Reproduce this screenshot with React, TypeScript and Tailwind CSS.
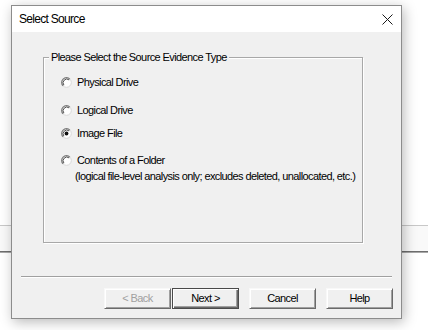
import React from 'react';

type RadioProps = { checked?: boolean };

function Radio({ checked = false }: RadioProps) {
  return (
    <svg width="11" height="11" viewBox="0 0 11 11" className="shrink-0">
      <circle cx="5.5" cy="5.5" r="4.8" fill="#ffffff" stroke="#d8d8d8" strokeWidth="1" />
      <path d="M2.1 8.9 A4.8 4.8 0 0 1 8.9 2.1" fill="none" stroke="#7a7a7a" strokeWidth="1.2" />
      <path d="M2.9 8.1 A3.7 3.7 0 0 1 8.1 2.9" fill="none" stroke="#3c3c3c" strokeWidth="0.9" />
      {checked && <circle cx="5.5" cy="5.5" r="1.9" fill="#111111" />}
    </svg>
  );
}

type OptionProps = { label: string; checked?: boolean; className?: string };

function Option({ label, checked, className = '' }: OptionProps) {
  return (
    <div className={`flex items-center ml-[17px] h-[13px] ${className}`}>
      <Radio checked={checked} />
      <span className="ml-[5px] whitespace-nowrap">{label}</span>
    </div>
  );
}

type ButtonProps = { label: string; disabled?: boolean; isDefault?: boolean; className?: string };

function WinButton({ label, disabled = false, isDefault = false, className = '' }: ButtonProps) {
  const frame = isDefault
    ? 'border border-[#4a4a4a] shadow-[inset_1px_1px_0_#ffffff,inset_-1px_-1px_0_#696969,inset_-2px_-2px_0_#a0a0a0]'
    : 'border border-t-[#f8f8f8] border-l-[#f8f8f8] border-r-[#6a6a6a] border-b-[#6a6a6a] shadow-[inset_1px_1px_0_#ffffff,inset_-1px_-1px_0_#a0a0a0]';
  return (
    <button
      disabled={disabled}
      className={`w-[67px] h-[21px] flex items-center justify-center bg-[#f0f0f0] ${frame} ${
        disabled ? 'text-[#a0a0a0]' : 'text-black'
      } ${className}`}
    >
      {label}
    </button>
  );
}

export default function App() {
  return (
    <div
      className="relative w-[440px] h-[330px] bg-white overflow-hidden text-[11px] leading-[13px] tracking-[-0.6px] text-black"
      style={{ fontFamily: '"Liberation Sans", Arial, sans-serif' }}
    >
      {/* window behind the dialog */}
      <div className="pt-[225px] w-[428px]">
        <div className="h-[1px] bg-[#c8c8c8]" />
        <div className="h-[25px] bg-[#f9f9f9]" />
        <div className="h-[1px] bg-[#6e6e6e]" />
        <div className="h-[1px] bg-[#a8a8a8]" />
      </div>

      {/* dialog */}
      <div className="absolute left-[11px] top-[5px] w-[391px] h-[314px] border border-[#8c8c8c] bg-[#f0f0f0] shadow-[2px_3px_12px_rgba(0,0,0,0.28)] flex flex-col">
        <div className="h-[26px] bg-white flex items-center justify-between pl-[7px] pr-[8px] shrink-0">
          <span className="text-[12px] tracking-[-0.7px]">Select Source</span>
          <svg width="11" height="11" viewBox="0 0 11 11">
            <path d="M0.5 0.5 L10.5 10.5 M10.5 0.5 L0.5 10.5" stroke="#1a1a1a" strokeWidth="1" />
          </svg>
        </div>

        <div className="flex flex-col flex-1">
          {/* group box */}
          <div className="mt-[25px] ml-[31px] w-[320px] h-[186px] border border-[#a8a8a8] shadow-[inset_1px_1px_0_#ffffff,1px_1px_0_#ffffff]">
            <span className="block w-fit -mt-[7px] ml-[5px] px-[2px] bg-[#f0f0f0]">
              Please Select the Source Evidence Type
            </span>
            <Option label="Physical Drive" className="mt-[12px]" />
            <Option label="Logical Drive" className="mt-[15px]" />
            <Option label="Image File" checked className="mt-[10px]" />
            <Option label="Contents of a Folder" className="mt-[14px]" />
            <div className="ml-[31px] mt-[3px] whitespace-nowrap">
              (logical file-level analysis only; excludes deleted, unallocated, etc.)
            </div>
          </div>

          {/* separator */}
          <div className="mt-[33px] mx-[9px] h-[1px] bg-[#a0a0a0]" />
          <div className="mx-[9px] h-[1px] bg-white" />

          {/* buttons */}
          <div className="mt-[10px] mr-[8px] flex justify-end">
            <WinButton label="< Back" disabled />
            <WinButton label="Next >" isDefault className="ml-[1px]" />
            <WinButton label="Cancel" className="ml-[10px]" />
            <WinButton label="Help" className="ml-[10px]" />
          </div>
        </div>
      </div>
    </div>
  );
}
